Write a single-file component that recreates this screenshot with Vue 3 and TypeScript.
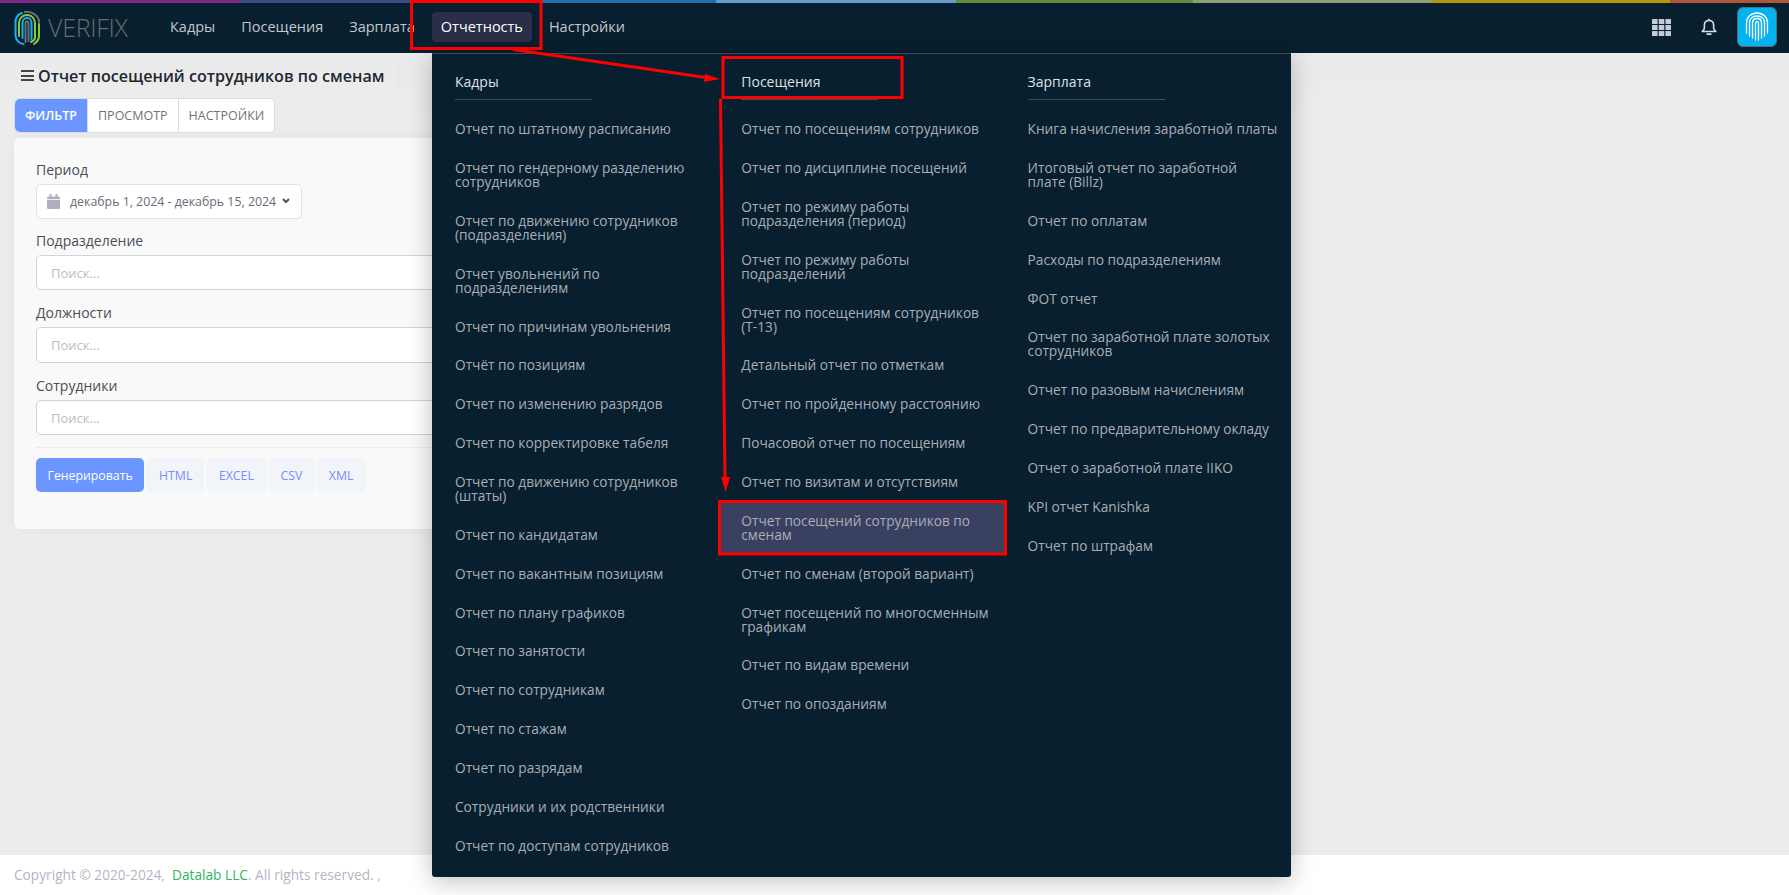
<script setup lang="ts">
const cols: { title: string; items: string[] }[] = [
  {
    title: 'Кадры',
    items: [
      'Отчет по штатному расписанию',
      'Отчет по гендерному разделению сотрудников',
      'Отчет по движению сотрудников (подразделения)',
      'Отчет увольнений по подразделениям',
      'Отчет по причинам увольнения',
      'Отчёт по позициям',
      'Отчет по изменению разрядов',
      'Отчет по корректировке табеля',
      'Отчет по движению сотрудников (штаты)',
      'Отчет по кандидатам',
      'Отчет по вакантным позициям',
      'Отчет по плану графиков',
      'Отчет по занятости',
      'Отчет по сотрудникам',
      'Отчет по стажам',
      'Отчет по разрядам',
      'Сотрудники и их родственники',
      'Отчет по доступам сотрудников',
    ],
  },
  {
    title: 'Посещения',
    items: [
      'Отчет по посещениям сотрудников',
      'Отчет по дисциплине посещений',
      'Отчет по режиму работы подразделения (период)',
      'Отчет по режиму работы подразделений',
      'Отчет по посещениям сотрудников (Т-13)',
      'Детальный отчет по отметкам',
      'Отчет по пройденному расстоянию',
      'Почасовой отчет по посещениям',
      'Отчет по визитам и отсутствиям',
      'Отчет посещений сотрудников по сменам',
      'Отчет по сменам (второй вариант)',
      'Отчет посещений по многосменным графикам',
      'Отчет по видам времени',
      'Отчет по опозданиям',
    ],
  },
  {
    title: 'Зарплата',
    items: [
      'Книга начисления заработной платы',
      'Итоговый отчет по заработной плате (Billz)',
      'Отчет по оплатам',
      'Расходы по подразделениям',
      'ФОТ отчет',
      'Отчет по заработной плате золотых сотрудников',
      'Отчет по разовым начислениям',
      'Отчет по предварительному окладу',
      'Отчет о заработной плате IIKO',
      'KPI отчет Kanishka',
      'Отчет по штрафам',
    ],
  },
]
const nav = ['Кадры', 'Посещения', 'Зарплата', 'Отчетность', 'Настройки']
const active = 'Отчет посещений сотрудников по сменам'
const fields = ['Подразделение', 'Должности', 'Сотрудники']
const exportsList = ['HTML', 'EXCEL', 'CSV', 'XML']
const strip = [
  { c: '#7a2a86', w: 240 },
  { c: '#3b4c8c', w: 238 },
  { c: '#1f6fa8', w: 238 },
  { c: '#6a9ac8', w: 240 },
  { c: '#5f8f3a', w: 237 },
  { c: '#8fa070', w: 239 },
  { c: '#b8960c', w: 238 },
  { c: '#b0563a', w: 119 },
]
</script>

<template>
  <div class="page">
    <div class="strip">
      <i v-for="s in strip" :key="s.c" :style="{ background: s.c, width: s.w + 'px' }"></i>
    </div>
    <header class="topbar">
      <div class="brand">
        <svg class="logo" viewBox="0 0 26 36" width="26" height="36" fill="none" stroke-width="2" stroke-linecap="round">
          <path d="M1.500 11v14c0 5 4 9 8 9" stroke="#12b4ea" />
          <path d="M8 3c-3 1-6 4-6.500 8" stroke="#12b4ea" />
          <path d="M11 2c7-1 14 4 14 10" stroke="#6c6f73" />
          <path d="M25 14v12c0 4-2 6-5 8" stroke="#8cc63f" />
          <path d="M5 26V13c0-5 4-8 8-8s8 3 8 8v15c0 2-2 3-4 4" stroke="#8cc63f" />
          <path d="M8.500 28V13c0-3 2-5 4.500-5s4.500 2 4.500 5v16" stroke="#12b4ea" />
          <path d="M11.500 32V13.500c0-1 .7-2 1.500-2s1.500 1 1.500 2V31" stroke="#6c6f73" />
        </svg>
        <span class="wordmark">VERIFIX</span>
      </div>
      <nav class="menu">
        <a v-for="n in nav" :key="n" class="menu-item" :class="{ on: n === 'Отчетность' }">{{ n }}</a>
      </nav>
      <div class="actions">
        <svg class="grid-ico" viewBox="0 0 19 17" width="19" height="17" fill="#c5cad6">
          <rect v-for="r in 9" :key="r" :x="((r - 1) % 3) * 6.7" :y="Math.floor((r - 1) / 3) * 6" width="5.600" height="5" rx=".6" />
        </svg>
        <svg class="bell-ico" viewBox="0 0 18 20" width="16" height="18" fill="none" stroke="#d7dbe3" stroke-width="1.800" stroke-linejoin="round">
          <path d="M9 2.500c-3 0-5.200 2.200-5.200 5.300v3.400c0 1.600-1 2.700-2.400 3.800h15.200c-1.400-1.100-2.400-2.200-2.400-3.800V7.800C14.200 4.700 12 2.500 9 2.500z" />
          <path d="M9 .8v1.700" />
          <path d="M7 18h4" stroke-linecap="round" stroke-width="2" />
        </svg>
        <div class="avatar">
          <svg viewBox="0 0 24 30" width="24" height="30" fill="none" stroke="#fff" stroke-width="1.300" stroke-linecap="round">
            <path d="M1.500 21V11C1.500 5 6 1 12 1s10.500 4 10.500 10v10" />
            <path d="M4.500 24V11c0-4.500 3.300-7 7.500-7s7.500 2.500 7.500 7v13" />
            <path d="M7.500 26V11c0-3 2-4.500 4.500-4.500s4.500 1.500 4.500 4.500v15" />
            <path d="M10.500 28V11.500c0-1 .7-2 1.500-2s1.500 1 1.500 2V28" />
          </svg>
        </div>
      </div>
    </header>

    <main class="content">
      <div class="head">
        <h1 class="title">
          <span class="burger"><b></b><b></b><b></b></span>
          Отчет посещений сотрудников по сменам
        </h1>
        <span class="vline"></span>
      </div>
      <div class="tabs">
        <button class="tab sel">ФИЛЬТР</button>
        <button class="tab">ПРОСМОТР</button>
        <button class="tab">НАСТРОЙКИ</button>
      </div>
      <section class="card">
        <label class="lbl">Период</label>
        <div class="range">
          <svg viewBox="0 0 13 15" width="13" height="15" fill="#b0aec0">
            <rect x="0" y="2.500" width="13" height="12.500" rx="1.500" />
            <rect x="2.500" y="0" width="2" height="3" />
            <rect x="8.500" y="0" width="2" height="3" />
            <rect x="0" y="5" width="13" height=".8" fill="#fff" />
          </svg>
          <span>декабрь 1, 2024 - декабрь 15, 2024</span>
          <svg viewBox="0 0 8 6" width="8" height="6" fill="none" stroke="#555" stroke-width="2">
            <path d="M1 1l3 3 3-3" />
          </svg>
        </div>
        <template v-for="f in fields" :key="f">
          <label class="lbl">{{ f }}</label>
          <div class="inp">Поиск...</div>
        </template>
        <hr class="sep" />
        <div class="btns">
          <button class="gen">Генерировать</button>
          <button v-for="e in exportsList" :key="e" class="exp">{{ e }}</button>
        </div>
      </section>
    </main>

    <footer class="foot">
      Copyright © 2020-2024, &nbsp;<span class="green">Datalab LLC</span>. All rights reserved. ,
    </footer>

    <div class="mega">
      <div v-for="c in cols" :key="c.title" class="col">
        <div class="col-title">{{ c.title }}</div>
        <a v-for="it in c.items" :key="it" class="row" :class="{ hit: it === active }">{{ it }}</a>
      </div>
    </div>

    <svg class="marks" width="1789" height="895" viewBox="0 0 1789 895" fill="none" stroke="#f00">
      <rect x="411.500" y="1.500" width="129.500" height="47" stroke-width="3" />
      <rect x="723" y="57.500" width="179" height="40" stroke-width="3" />
      <rect x="719.500" y="501.500" width="286" height="52.500" stroke-width="3" />
      <path d="M513 49.500l193 28" stroke-width="3" />
      <path d="M720 79l-15-5-1 8z" fill="#f00" stroke="none" />
      <path d="M720.500 99l4.500 379" stroke-width="3" />
      <path d="M725.700 492l-4.700-15h9z" fill="#f00" stroke="none" />
    </svg>
  </div>
</template>

<style>
html, body { margin: 0; padding: 0; background: #ededed; }
</style>

<style scoped>
.page {
  width: 1789px;
  height: 895px;
  position: relative;
  overflow: hidden;
  display: flex;
  flex-direction: column;
  font-family: "Open Sans", "Noto Sans", sans-serif;
  background: linear-gradient(#e8e8ea, #ededed 120px);
}
.strip { display: flex; height: 3px; flex: none; }
.strip i { display: block; height: 3px; }
.topbar {
  height: 50px;
  flex: none;
  background: #071f2f;
  display: flex;
  align-items: center;
  padding-bottom: 2px;
  box-sizing: border-box;
}
.brand { display: flex; align-items: center; margin-left: 14px; width: 147px; }
.logo { margin-top: 1px; }
.wordmark {
  margin-left: 8px;
  font-size: 25px;
  font-weight: 300;
  letter-spacing: -.3px;
  line-height: 30px;
  color: #696c70;
}
.menu { display: flex; }
.menu-item {
  font-size: 14.500px;
  color: #c3c8d0;
  padding: 0 9px;
  height: 30px;
  line-height: 29px;
  margin-right: 8px;
  border-radius: 4px;
}
.menu-item.on { background: #2a2e47; color: #fff; }
.actions { margin-left: auto; display: flex; align-items: center; margin-right: 12px; }
.grid-ico { margin-right: 30px; }
.bell-ico { margin-right: 20px; }
.avatar {
  width: 40px;
  height: 40px;
  border-radius: 6px;
  background: #05b2f0;
  border: 1px solid #5c6b78;
  box-sizing: border-box;
  display: flex;
  align-items: center;
  justify-content: center;
}
.content { flex: 1; padding: 0 14px; min-height: 0; }
.head { display: flex; align-items: center; height: 45px; }
.title {
  margin: 0;
  display: flex;
  align-items: center;
  padding-left: 7px;
  font-size: 16.100px;
  font-weight: 600;
  color: #1f2733;
}
.vline { width: 1px; height: 26px; background: #e2e2e5; margin-left: 14px; }
.burger { display: inline-flex; flex-direction: column; gap: 2.500px; margin-right: 4px; }
.burger b { display: block; width: 13px; height: 2px; background: #444; }
.tabs {
  display: inline-flex;
  height: 35px;
  border-radius: 5px;
  background: #fff;
  border: 1px solid #d9dde6;
  box-sizing: border-box;
  vertical-align: top;
}
.tab {
  border: 0;
  background: transparent;
  font: 400 12.500px "Open Sans", sans-serif;
  color: #6f737b;
  padding: 0 10px;
  border-left: 1px solid #d9dde6;
}
.tab:first-child { border-left: 0; }
.tab.sel { background: #6b96ff; color: #fff; font-weight: 600; border-radius: 5px 0 0 5px; }
.card {
  margin-top: 5px;
  width: 900px;
  height: 391px;
  background: #f9f9f9;
  border-radius: 6px;
  padding: 22.500px 22px;
  box-sizing: border-box;
  box-shadow: 0 0 14px rgba(0, 0, 0, .05);
}
.lbl { display: block; font-size: 14px; color: #4a4e57; line-height: 17px; margin-bottom: 6px; }
.range {
  width: 266px;
  height: 35px;
  background: #fff;
  border: 1px solid #dfe2e9;
  border-radius: 5px;
  box-sizing: border-box;
  display: flex;
  align-items: center;
  padding: 0 10px;
  font-size: 12.350px;
  color: #6a6a78;
  margin-bottom: 13px;
}
.range span { margin: 0 6px 0 10px; white-space: nowrap; }
.inp {
  height: 35.500px;
  background: #fff;
  border: 1px solid #cfd3dc;
  border-radius: 5px;
  box-sizing: border-box;
  padding: 0 14px;
  line-height: 34.500px;
  font-size: 13px;
  color: #b9bcc8;
  margin-bottom: 14px;
}
.sep { border: 0; border-top: 1px solid #e8ebf1; margin: -2px 0 10px; }
.btns { display: flex; gap: 3px; }
.gen, .exp {
  height: 34px;
  border: 0;
  border-radius: 5px;
  font: 400 12.300px "Open Sans", sans-serif;
}
.gen { background: #6b96ff; color: #fff; padding: 0 11.500px; }
.exp { background: #f1f4f9; color: #7a8cff; padding: 0 11.800px; }
.foot {
  height: 40px;
  flex: none;
  background: #fff;
  padding: 0 14px;
  line-height: 40px;
  font-size: 13.700px;
  color: #b3b5c4;
}
.green { color: #2fb463; }
.mega {
  position: absolute;
  left: 432px;
  top: 53px;
  width: 859px;
  height: 824px;
  background: #071f2f;
  border-top: 1px solid #3c4b58;
  box-sizing: border-box;
  display: grid;
  grid-template-columns: repeat(3, 286.300px);
  box-shadow: 0 4px 24px rgba(0, 0, 0, .25);
  border-radius: 0 0 3px 3px;
}
.col { display: flex; flex-direction: column; }
.col-title {
  margin: 20px 0 9.800px 23px;
  width: 137px;
  height: 26px;
  box-sizing: border-box;
  font-size: 14px;
  font-weight: 500;
  color: #dfe2e6;
  border-bottom: 1px solid #3c4b58;
  line-height: 16px;
}
.row {
  display: block;
  padding: 12.425px 12.800px 12.425px 23px;
  font-size: 13.700px;
  line-height: 14px;
  color: #a9aeb6;
}
.row.hit { background: #3a4060; }
.marks { position: absolute; left: 0; top: 0; pointer-events: none; }
</style>
